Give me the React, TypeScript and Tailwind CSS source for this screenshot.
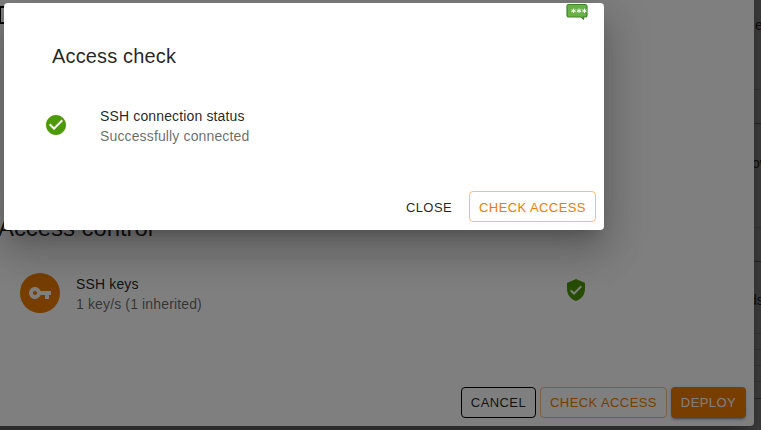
import React from "react";

const outlined =
  "flex h-[31px] items-center justify-center rounded border text-[13px] leading-[23px] tracking-[0.42px] uppercase whitespace-nowrap";

function CheckAccessButton({ className = "" }: { className?: string }) {
  return (
    <button className={`${outlined} w-[127px] border-[#ef7d00]/50 text-[#ef7d00] ${className}`}>Check access</button>
  );
}

function ListText({ title, detail }: { title: string; detail: string }) {
  return (
    <div className="text-sm leading-5 tracking-[0.14px] whitespace-nowrap">
      <p className="text-black/87">{title}</p>
      <p className="text-black/60">{detail}</p>
    </div>
  );
}

function PageEdge() {
  return (
    <div className="ml-auto flex h-full w-[7px] flex-col overflow-hidden text-sm leading-5 whitespace-nowrap text-black/80">
      <div className="h-[90px] border-b border-black/15 pt-[15px] pl-px">e</div>
      <div className="h-[34px] border-b border-black/40" />
      <div className="flex h-[104px] flex-col border-b border-black/15">
        <span className="-ml-1 h-[29px] text-black/50">)</span>
        <span className="-ml-[2px]">ow</span>
      </div>
      <div className="h-[34px] border-b border-black/40" />
      <div className="flex h-[72px] flex-col border-b border-black/15">
        <span className="-ml-1 h-[28px] text-black/50">)</span>
        <span className="-ml-[5px]">ds</span>
      </div>
      <div className="h-4 border-b border-black/15" />
      <div className="h-4 border-b border-black/15" />
      <div className="h-4 border-b border-black/15" />
      <div className="h-[17px] border-b border-black/40" />
      <span className="-ml-1 text-black/50">)</span>
    </div>
  );
}

function DeployDialog() {
  return (
    <section className="absolute -top-10 -left-10 flex h-[466px] w-[794px] flex-col rounded bg-white pt-10 pl-10 shadow-[0_11px_15px_-7px_rgba(0,0,0,0.2),0_24px_38px_3px_rgba(0,0,0,0.14),0_9px_46px_8px_rgba(0,0,0,0.12)]">
      <div className="mt-[6px] -ml-px h-[18px] w-10 shrink-0 border-2 border-black" />
      <h2 className="mt-[188px] -ml-[2px] text-2xl leading-8 tracking-[-0.08px] text-black/87">Access control</h2>
      <div className="mt-[29px] flex h-10 items-center pl-5">
        <span className="flex size-10 items-center justify-center rounded-full bg-[#ef7d00] text-white">
          <svg className="size-6" viewBox="0 0 24 24" fill="currentColor">
            <path d="M12.65 10C11.83 7.67 9.61 6 7 6c-3.31 0-6 2.69-6 6s2.69 6 6 6c2.61 0 4.83-1.67 5.65-4H17v4h4v-4h2v-4H12.65zM7 14c-1.1 0-2-.9-2-2s.9-2 2-2 2 .9 2 2-.9 2-2 2z" />
          </svg>
        </span>
        <div className="ml-4 w-[488px] pt-[2px]">
          <ListText title="SSH keys" detail="1 key/s (1 inherited)" />
        </div>
        <svg className="mt-[-6px] size-6 text-[#4c9a06]" viewBox="0 0 24 24" fill="currentColor">
          <path d="M12 1 3 5v6c0 5.55 3.84 10.74 9 12 5.16-1.26 9-6.45 9-12V5l-9-4zm-2 16-4-4 1.41-1.41L10 14.17l6.59-6.59L18 9l-8 8z" />
        </svg>
      </div>
      <footer className="mt-auto flex justify-end gap-1 p-2">
        <button className={`${outlined} w-[75px] border-black text-black/87`}>Cancel</button>
        <CheckAccessButton />
        <button className="flex h-[31px] w-[75px] items-center justify-center rounded bg-[#ef7d00] text-[13px] leading-[23px] tracking-[0.42px] text-white uppercase shadow-[0_3px_1px_-2px_rgba(0,0,0,0.2),0_2px_2px_0_rgba(0,0,0,0.14),0_1px_5px_0_rgba(0,0,0,0.12)]">
          Deploy
        </button>
      </footer>
    </section>
  );
}

function AccessDialog() {
  return (
    <section className="absolute top-[3px] left-1 flex h-[227px] w-[600px] flex-col rounded bg-white shadow-[0_11px_15px_-7px_rgba(0,0,0,0.2),0_24px_38px_3px_rgba(0,0,0,0.14),0_9px_46px_8px_rgba(0,0,0,0.12)]">
      <h1 className="mt-[37px] ml-12 text-xl leading-8 tracking-[0.15px] text-black/87">Access check</h1>
      <div className="mt-[34px] flex items-center pl-10">
        <svg className="mt-[-2px] size-6 text-[#4c9a06]" viewBox="0 0 24 24" fill="currentColor">
          <path d="M12 2C6.48 2 2 6.48 2 12s4.480 10 10 10 10-4.480 10-10S17.520 2 12 2zm-2 15-5-5 1.410-1.410L10 14.170l7.590-7.590L19 8l-9 9z" />
        </svg>
        <div className="ml-8">
          <ListText title="SSH connection status" detail="Successfully connected" />
        </div>
      </div>
      <footer className="mt-auto flex justify-end gap-1 p-2">
        <button className="h-[31px] w-[73px] pt-[2px] pl-px text-[13px] leading-[23px] tracking-[0.42px] text-black/87 uppercase">
          Close
        </button>
        <CheckAccessButton className="pt-[2px]" />
      </footer>
      <svg className="absolute top-0 left-[562px] h-[17px] w-[23px]" viewBox="0 0 23 17">
        <path
          d="M3 1.500h16q2 0 2 2v8.500q0 2-2 2h-1.500v2l-2.500-2H3q-2 0-2-2V3.500q0-2 2-2z"
          fill="#6ab04a"
          stroke="#3f8324"
          strokeWidth="1.200"
        />
        <path
          d="M7.500 5.500v4.500M5.300 6.800l4.400 2M9.700 6.800l-4.400 2M13 5.500v4.500M10.800 6.800l4.400 2M15.200 6.800l-4.400 2M18.500 5.500v4.500M16.300 6.800l4.200 2M20.500 6.800l-4.200 2"
          fill="none"
          stroke="#f2f9ee"
        />
      </svg>
    </section>
  );
}

export default function App() {
  return (
    <main className="relative h-[430px] w-[761px] overflow-hidden bg-white font-['Liberation_Sans',Arial,sans-serif]">
      <PageEdge />
      <div className="absolute inset-0 bg-black/50" />
      <DeployDialog />
      <div className="absolute inset-0 bg-black/50" />
      <AccessDialog />
    </main>
  );
}
